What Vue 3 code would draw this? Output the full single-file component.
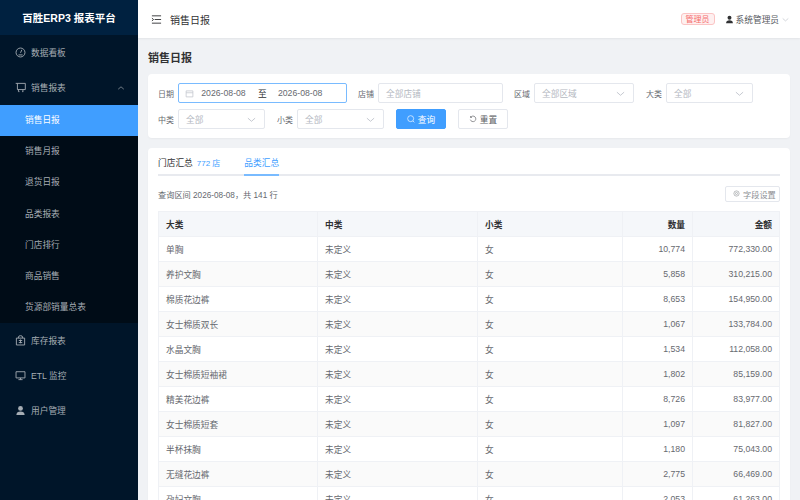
<template>
  <div class="layout">
    <aside class="sidebar">
      <div class="logo">百胜ERP3 报表平台</div>
      <div class="menu-item">
        <svg class="menu-icon" viewBox="0 0 16 16"><circle cx="8" cy="8" r="6.5" /><path d="M8 8.500 10 4M5 11.500h6" /></svg>
        <span>数据看板</span>
      </div>
      <div class="menu-item">
        <svg class="menu-icon" viewBox="0 0 16 16"><path d="M1 2h14v9H3.500M3.500 2v9M5 14h1.500M10.500 14H12M5 11v3M11.500 11v3" /></svg>
        <span>销售报表</span>
        <svg class="menu-arrow" viewBox="0 0 10 10"><path d="M1.500 6.500 5 3.500l3.500 3" /></svg>
      </div>
      <div class="submenu">
        <div v-for="item in subItems" :key="item" class="sub-item" :class="{ active: item === '销售日报' }">{{ item }}</div>
      </div>
      <div class="menu-item">
        <svg class="menu-icon" viewBox="0 0 16 16"><path d="M2 4.500h12v10H2zM5 4.500V3a3 2 0 0 1 6 0v1.500M5.500 8h5M8 6.500V12M5.500 11h5" /></svg>
        <span>库存报表</span>
      </div>
      <div class="menu-item">
        <svg class="menu-icon" viewBox="0 0 16 16"><path d="M1.500 2.500h13v9h-13zM8 11.500v2.500M5 14h6" /></svg>
        <span>ETL 监控</span>
      </div>
      <div class="menu-item">
        <svg class="menu-icon solid" viewBox="0 0 16 16"><circle cx="8" cy="5" r="3.500" /><path d="M2 14.500c0-3.500 2.500-5 6-5s6 1.500 6 5z" /></svg>
        <span>用户管理</span>
      </div>
    </aside>

    <div class="main">
      <header class="topbar">
        <svg class="fold" viewBox="0 0 12 12"><path d="M1 2h10M4 6h7M1 10h10M1 4.500 2.800 6 1 7.500" /></svg>
        <span class="crumb">销售日报</span>
        <span class="role">管理员</span>
        <svg class="user-icon" viewBox="0 0 16 16"><circle cx="8" cy="5" r="3.500" /><path d="M2 14.500c0-3.500 2.500-5 6-5s6 1.500 6 5z" /></svg>
        <span class="user-name">系统管理员</span>
        <svg class="chev small" viewBox="0 0 10 10"><path d="M1 3.500 5 7l4-3.500" /></svg>
      </header>

      <div class="content">
        <h1 class="page-title">销售日报</h1>

        <section class="card filters">
          <div class="filter-row">
            <label class="lbl">日期</label>
            <div class="date-range">
              <svg class="cal" viewBox="0 0 12 12"><path d="M1.500 2.500h9v8h-9zM1.500 5h9" /></svg>
              <span class="date">2026-08-08</span>
              <span class="to">至</span>
              <span class="date">2026-08-08</span>
            </div>
            <label class="lbl gap-lbl">店铺</label>
            <div class="select shop"><span>全部店铺</span></div>
            <label class="lbl gap-lbl">区域</label>
            <div class="select wide">
              <span>全部区域</span>
              <svg class="chev" viewBox="0 0 10 10"><path d="M1 3.500 5 7l4-3.500" /></svg>
            </div>
            <label class="lbl gap-lbl big">大类</label>
            <div class="select">
              <span>全部</span>
              <svg class="chev" viewBox="0 0 10 10"><path d="M1 3.500 5 7l4-3.500" /></svg>
            </div>
          </div>
          <div class="filter-row">
            <label class="lbl">中类</label>
            <div class="select">
              <span>全部</span>
              <svg class="chev" viewBox="0 0 10 10"><path d="M1 3.500 5 7l4-3.500" /></svg>
            </div>
            <label class="lbl gap-lbl big">小类</label>
            <div class="select">
              <span>全部</span>
              <svg class="chev" viewBox="0 0 10 10"><path d="M1 3.500 5 7l4-3.500" /></svg>
            </div>
            <button class="btn primary">
              <svg viewBox="0 0 12 12"><circle cx="5.500" cy="5.500" r="4.500" /><path d="m9 9 2 2" /></svg>
              查询
            </button>
            <button class="btn">
              <svg viewBox="0 0 12 12"><path d="M2.500 3.500A4.200 4.200 0 1 1 2 7M2.300 1.500v2.200h2.200" /></svg>
              重置
            </button>
          </div>
        </section>

        <section class="card result">
          <div class="tabs">
            <div class="tab">门店汇总<span class="count">772 店</span></div>
            <div class="tab active">品类汇总</div>
          </div>
          <div class="table-head">
            <span>查询区间 2026-08-08，共 141 行</span>
            <button class="field-btn">
              <svg viewBox="0 0 12 12"><circle cx="6" cy="6" r="4.500" /><circle cx="6" cy="6" r="1.800" /></svg>
              字段设置
            </button>
          </div>
          <table class="grid">
            <colgroup>
              <col class="c1" /><col class="c2" /><col class="c3" /><col class="c4" /><col class="c5" />
            </colgroup>
            <thead>
              <tr>
                <th>大类</th><th>中类</th><th>小类</th><th class="num">数量</th><th class="num">金额</th>
              </tr>
            </thead>
            <tbody>
              <tr v-for="row in rows" :key="row[0]">
                <td>{{ row[0] }}</td>
                <td>未定义</td>
                <td>女</td>
                <td class="num">{{ row[1] }}</td>
                <td class="num">{{ row[2] }}</td>
              </tr>
            </tbody>
          </table>
        </section>
      </div>
    </div>
  </div>
</template>

<script setup>
const subItems = ["销售日报", "销售月报", "退货日报", "品类报表", "门店排行", "商品销售", "货源部销量总表"];

const rows = [
  ["单胸", "10,774", "772,330.00"],
  ["养护文胸", "5,858", "310,215.00"],
  ["棉质花边裤", "8,653", "154,950.00"],
  ["女士棉质双长", "1,067", "133,784.00"],
  ["水晶文胸", "1,534", "112,058.00"],
  ["女士棉质短袖裙", "1,802", "85,159.00"],
  ["精美花边裤", "8,726", "83,977.00"],
  ["女士棉质短套", "1,097", "81,827.00"],
  ["半杯抹胸", "1,180", "75,043.00"],
  ["无缝花边裤", "2,775", "66,469.00"],
  ["孕妇文胸", "2,053", "61,263.00"],
];
</script>

<style>
html, body {
  margin: 0;
  overflow: hidden;
}
</style>

<style scoped>
.layout {
  display: flex;
  width: 800px;
  height: 500px;
  overflow: hidden;
  font-family: "Liberation Sans", "Noto Sans CJK SC", sans-serif;
  font-size: 8.700px;
  color: #66696f;
  background: #f0f2f5;
}

.sidebar {
  width: 138px;
  flex: none;
  background: #001529;
  color: #a6adb4;
}
.logo {
  height: 35px;
  line-height: 36px;
  text-align: center;
  color: #fff;
  font-size: 10.500px;
  font-weight: 700;
  background: #002140;
}
.menu-item {
  display: flex;
  align-items: center;
  height: 35px;
  padding-left: 15px;
}
.menu-icon {
  width: 11px;
  height: 11px;
  margin-right: 5px;
  fill: none;
  stroke: #a6adb4;
  stroke-width: 1.300;
}
.menu-icon.solid {
  fill: #a6adb4;
  stroke: none;
}
.menu-arrow {
  width: 8px;
  height: 8px;
  margin-left: auto;
  margin-right: 13px;
  fill: none;
  stroke: #8a939b;
}
.submenu {
  background: #000c17;
}
.sub-item {
  height: 31.200px;
  line-height: 31px;
  padding-left: 25px;
}
.sub-item.active {
  background: #409eff;
  color: #fff;
}

.main {
  flex: 1;
  min-width: 0;
}
.topbar {
  display: flex;
  align-items: center;
  height: 38px;
  padding: 0 11px 0 13px;
  background: #fff;
  box-sizing: border-box;
  box-shadow: 0 1px 2px rgba(0, 0, 0, 0.06);
}
.fold {
  width: 11px;
  height: 11px;
  margin-right: 8px;
  fill: none;
  stroke: #303133;
  stroke-width: 1;
}
.crumb {
  font-size: 10px;
  color: #303133;
}
.role {
  margin-left: auto;
  padding: 0 4px;
  height: 12px;
  line-height: 11px;
  box-sizing: border-box;
  font-size: 8px;
  color: #f56c6c;
  background: #fef0f0;
  border: 1px solid #fbc4c4;
  border-radius: 3px;
}
.user-icon {
  width: 9px;
  height: 9px;
  margin: 0 2px 0 10px;
  fill: #303133;
}
.user-name {
  font-size: 8.700px;
  color: #55585e;
}
.chev {
  width: 9px;
  height: 9px;
  margin-left: auto;
  fill: none;
  stroke: #c0c4cc;
}
.chev.small {
  width: 7px;
  height: 7px;
  margin-left: 3px;
}

.content {
  padding: 0 10px;
}
.page-title {
  margin: 0;
  height: 36px;
  line-height: 40px;
  font-size: 11px;
  font-weight: 700;
  color: #303133;
}
.card {
  background: #fff;
  border-radius: 4px;
  box-shadow: 0 1px 2px rgba(0, 0, 0, 0.04);
}
.filters {
  height: 64px;
  box-sizing: border-box;
  padding: 9px 10px 0;
  margin-bottom: 10px;
}
.filter-row {
  display: flex;
  align-items: center;
  height: 20px;
  margin-bottom: 6px;
}
.lbl {
  width: 20px;
  flex: none;
  font-size: 8px;
}
.gap-lbl {
  margin-left: 11px;
}
.gap-lbl.big {
  margin-left: 12px;
}
.date-range {
  display: flex;
  align-items: center;
  width: 169px;
  height: 20px;
  box-sizing: border-box;
  padding-left: 6px;
  border: 1px solid #79bbff;
  border-radius: 2px;
}
.cal {
  width: 9px;
  height: 9px;
  fill: none;
  stroke: #c0c4cc;
}
.date {
  width: 45px;
  margin-left: 7px;
  text-align: center;
}
.to {
  margin: 0 4px 0 12px;
  color: #303133;
}
.select {
  display: flex;
  align-items: center;
  width: 87px;
  height: 20px;
  box-sizing: border-box;
  padding: 0 8px 0 7px;
  border: 1px solid #e4e7ed;
  border-radius: 2px;
  color: #b4b8bf;
}
.select.shop {
  width: 125px;
}
.select.wide {
  width: 100px;
}
.btn {
  display: flex;
  align-items: center;
  justify-content: center;
  gap: 3px;
  width: 50px;
  height: 20px;
  margin-left: 12px;
  padding: 0;
  font: inherit;
  color: #606266;
  background: #fff;
  border: 1px solid #e4e7ed;
  border-radius: 2px;
}
.btn svg {
  width: 8px;
  height: 8px;
  fill: none;
  stroke: currentColor;
}
.btn.primary {
  background: #409eff;
  border-color: #409eff;
  color: #fff;
}

.result {
  padding: 0 10px;
  height: 400px;
}
.tabs {
  display: flex;
  height: 28px;
  box-sizing: border-box;
  border-bottom: 2px solid #e8eaef;
}
.tab {
  position: relative;
  height: 28px;
  line-height: 30px;
  margin-right: 24px;
  color: #303133;
}
.tab.active {
  color: #409eff;
}
.tab.active::after {
  content: "";
  position: absolute;
  left: 0;
  right: 0;
  bottom: 0;
  height: 2px;
  background: #79bbff;
}
.count {
  margin-left: 4px;
  font-size: 8px;
  color: #409eff;
}
.table-head {
  display: flex;
  align-items: center;
  justify-content: space-between;
  height: 35px;
  font-size: 8.200px;
}
.field-btn {
  display: flex;
  align-items: center;
  gap: 3px;
  width: 55px;
  height: 16px;
  padding: 0 0 0 7px;
  font: inherit;
  color: #8d9095;
  background: #fff;
  border: 1px solid #e4e7ed;
  border-radius: 2px;
}
.field-btn svg {
  width: 7px;
  height: 7px;
  fill: none;
  stroke: currentColor;
}

.grid {
  width: 621px;
  table-layout: fixed;
  border-collapse: collapse;
}
.c1 { width: 159px; }
.c2 { width: 160px; }
.c3 { width: 145px; }
.c4 { width: 70px; }
.c5 { width: 87px; }
.grid th,
.grid td {
  height: 25px;
  padding: 0 7px;
  box-sizing: border-box;
  text-align: left;
  border: 1px solid #eff1f5;
}
.grid th {
  background: #f5f7fa;
  color: #303133;
  font-weight: 700;
}
.grid tbody tr:nth-child(even) td {
  background: #fafafa;
}
.grid .num {
  text-align: right;
}
</style>
